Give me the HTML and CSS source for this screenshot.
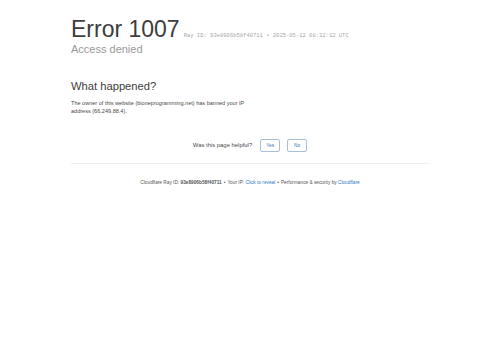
FILE: index.html
```html
<!DOCTYPE html>
<html lang="en">
<head>
    <meta charset="UTF-8">
    <meta name="viewport" content="width=device-width, initial-scale=1.0">
    <title>Access denied | bioneprogramming.net used Cloudflare to restrict access</title>
    <link rel="stylesheet" href="styles.css">
</head>
<body>
    <div class="wrapper">
        <header class="error-header">
            <h1 class="error-title">
                <span class="error-code">Error 1007</span>
                <small class="ray-id">Ray ID: 93e8906b58f40711 &bull; 2025-05-12 08:32:12 UTC</small>
            </h1>
            <h2 class="error-subtitle">Access denied</h2>
        </header>

        <section class="details">
            <h2 class="details-title">What happened?</h2>
            <p class="details-text">The owner of this website (bioneprogramming.net) has banned your IP<br>address (66.249.88.4).</p>
        </section>

        <div class="feedback">
            <span class="feedback-label">Was this page helpful?</span>
            <button class="feedback-button" type="button">Yes</button>
            <button class="feedback-button" type="button">No</button>
        </div>

        <footer class="footer">
            <span>Cloudflare Ray ID: <strong class="footer-ray">93e8906b58f40711</strong></span>
            <span class="sep">&bull;</span>
            <span>Your IP: <a href="#" class="footer-link">Click to reveal</a></span>
            <span class="sep">&bull;</span>
            <span>Performance &amp; security by <a href="#" class="footer-link">Cloudflare</a></span>
        </footer>
    </div>
</body>
</html>
```

FILE: styles.css
```css
:root {
    --background: #ffffff;
    --foreground: #404040;
    --muted: #999999;
    --border: #ededed;
    --link: #2f7bbf;
}

* {
    margin: 0;
    padding: 0;
    box-sizing: border-box;
}

body {
    font-family: 'Liberation Sans', Arial, sans-serif;
    color: var(--foreground);
    background-color: var(--background);
}

.wrapper {
    width: 358px;
    margin: 0 auto;
    padding-top: 17px;
}

.error-title {
    display: flex;
    align-items: baseline;
    font-weight: 400;
    line-height: 1.1;
}

.error-code {
    font-size: 23px;
    color: #3d3d3d;
}

.ray-id {
    font-family: 'Liberation Mono', 'DejaVu Sans Mono', monospace;
    font-size: 5.5px;
    color: #a8a8a8;
    margin-left: 4px;
}

.error-subtitle {
    font-size: 11px;
    font-weight: 400;
    color: var(--muted);
    line-height: 1.2;
    margin-top: 1px;
}

.details {
    margin-top: 24px;
}

.details-title {
    font-size: 11.2px;
    font-weight: 400;
    line-height: 1.2;
    color: #3d3d3d;
}

.details-text {
    font-size: 5.55px;
    line-height: 1.45;
    margin-top: 5px;
    color: #4a4a4a;
}

.feedback {
    display: flex;
    justify-content: center;
    align-items: center;
    gap: 7px;
    margin-top: 24px;
    padding-bottom: 11px;
    border-bottom: 1px solid var(--border);
    font-size: 5.9px;
    color: #4a4a4a;
}

.feedback-label {
    margin-right: 1px;
}

.feedback-button {
    font-family: inherit;
    font-size: 4.8px;
    color: #3a6fb0;
    background: var(--background);
    border: 1px solid #a9bfd8;
    border-radius: 2px;
    width: 20px;
    height: 13px;
}

.footer {
    display: flex;
    justify-content: center;
    gap: 2px;
    margin-top: 16px;
    font-size: 4.75px;
    color: #555555;
}

.footer-ray {
    font-weight: 700;
}

.footer-link {
    color: var(--link);
    text-decoration: none;
}
```
